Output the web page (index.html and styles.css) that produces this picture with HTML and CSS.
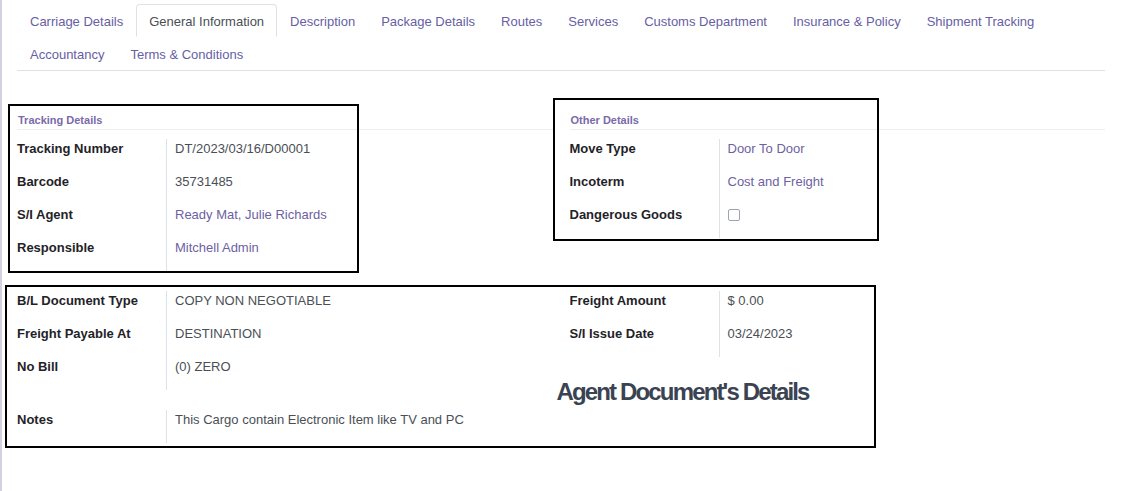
FILE: index.html
```html
<!DOCTYPE html>
<html>
<head>
<meta charset="utf-8">
<link rel="stylesheet" href="styles.css">
</head>
<body>
<div class="page">
  <ul class="tabs">
    <li class="tab">Carriage Details</li>
    <li class="tab active">General Information</li>
    <li class="tab">Description</li>
    <li class="tab">Package Details</li>
    <li class="tab">Routes</li>
    <li class="tab">Services</li>
    <li class="tab">Customs Department</li>
    <li class="tab">Insurance &amp; Policy</li>
    <li class="tab">Shipment Tracking</li>
    <li class="tab">Accountancy</li>
    <li class="tab">Terms &amp; Conditions</li>
  </ul>

  <div class="sheet">
    <div class="group-row top">
      <div class="col">
        <div class="group-title">Tracking Details</div>
        <div class="fields">
          <div class="label">Tracking Number</div><div class="value">DT/2023/03/16/D00001</div>
          <div class="label">Barcode</div><div class="value">35731485</div>
          <div class="label">S/I Agent</div><div class="value link">Ready Mat, Julie Richards</div>
          <div class="label">Responsible</div><div class="value link">Mitchell Admin</div>
        </div>
      </div>
      <div class="col">
        <div class="group-title">Other Details</div>
        <div class="fields">
          <div class="label">Move Type</div><div class="value link">Door To Door</div>
          <div class="label">Incoterm</div><div class="value link">Cost and Freight</div>
          <div class="label">Dangerous Goods</div><div class="value"><span class="checkbox"></span></div>
        </div>
      </div>
    </div>

    <div class="group-row bottom">
      <div class="col">
        <div class="fields">
          <div class="label">B/L Document Type</div><div class="value">COPY NON NEGOTIABLE</div>
          <div class="label">Freight Payable At</div><div class="value">DESTINATION</div>
          <div class="label">No Bill</div><div class="value">(0) ZERO</div>
        </div>
        <div class="fields notes">
          <div class="label">Notes</div><div class="value">This Cargo contain Electronic Item like TV and PC</div>
        </div>
      </div>
      <div class="col">
        <div class="fields">
          <div class="label">Freight Amount</div><div class="value">$ 0.00</div>
          <div class="label">S/I Issue Date</div><div class="value">03/24/2023</div>
        </div>
        <h3 class="doc-heading">Agent Document's Details</h3>
      </div>
    </div>
  </div>
</div>

<div class="annotation box-tracking"></div>
<div class="annotation box-other"></div>
<div class="annotation box-bill"></div>
</body>
</html>
```

FILE: styles.css
```css
html, body {
  margin: 0;
  padding: 0;
  height: 100%;
}

body {
  position: relative;
  font-family: "Liberation Sans", Arial, sans-serif;
  font-size: 13px;
  color: #212529;
  background: #ffffff;
}

.page {
  box-sizing: border-box;
  min-height: 100%;
  border-left: 2px solid #d3d1e0;
  padding: 0 34px 0 15px;
}

/* Tabs */
.tabs {
  list-style: none;
  margin: 0;
  padding: 4px 0 0 0;
  display: flex;
  flex-wrap: wrap;
  border-bottom: 1px solid #dee2e6;
}

.tab {
  box-sizing: border-box;
  height: 33px;
  line-height: 33px;
  padding: 0 12px;
  border: 1px solid transparent;
  border-radius: 4px 4px 0 0;
  color: #675ea4;
  white-space: nowrap;
  overflow: visible;
}

.tab.active {
  color: #4a4f56;
  border-color: #dee2e6;
  border-bottom-color: #ffffff;
  background: #ffffff;
}

/* Sheet */
.sheet {
  padding-top: 41px;
}

.group-row {
  display: grid;
  grid-template-columns: 1fr 1fr;
  column-gap: 17px;
  align-items: start;
}

.group-row.bottom {
  margin-top: 20px;
}

.group-title {
  font-size: 11px;
  font-weight: bold;
  line-height: 17px;
  color: #7a6aab;
  padding-left: 1px;
  border-bottom: 1px solid #eceef1;
  margin-bottom: 9px;
}

.fields {
  display: grid;
  grid-template-columns: 149px 1fr;
}

.label {
  box-sizing: border-box;
  font-weight: bold;
  line-height: 18px;
  height: 33px;
  padding-top: 1px;
  color: #1f2328;
}

.value {
  box-sizing: border-box;
  line-height: 18px;
  height: 33px;
  padding-top: 1px;
  padding-left: 8px;
  border-left: 1px solid #dee2e6;
  color: #4a4f55;
}

.value.link {
  color: #6d5fa3;
}

.fields.notes {
  margin-top: 20px;
}

.checkbox {
  display: block;
  box-sizing: border-box;
  width: 12px;
  height: 12px;
  margin-top: 3px;
  border: 1px solid #9ea4ab;
  border-radius: 2px;
  background: #fff;
}

.doc-heading {
  margin: 20px 0 0 -13px;
  font-size: 24px;
  line-height: 30px;
  font-weight: bold;
  letter-spacing: -1.85px;
  color: #3a4352;
}

/* Annotation rectangles drawn over the screenshot */
.annotation {
  position: absolute;
  box-sizing: border-box;
  border: 2px solid #000000;
  pointer-events: none;
}

.box-tracking {
  left: 8px;
  top: 104px;
  width: 351px;
  height: 169px;
}

.box-other {
  left: 553px;
  top: 98px;
  width: 326px;
  height: 143px;
}

.box-bill {
  left: 5px;
  top: 285px;
  width: 871px;
  height: 163px;
}
```
